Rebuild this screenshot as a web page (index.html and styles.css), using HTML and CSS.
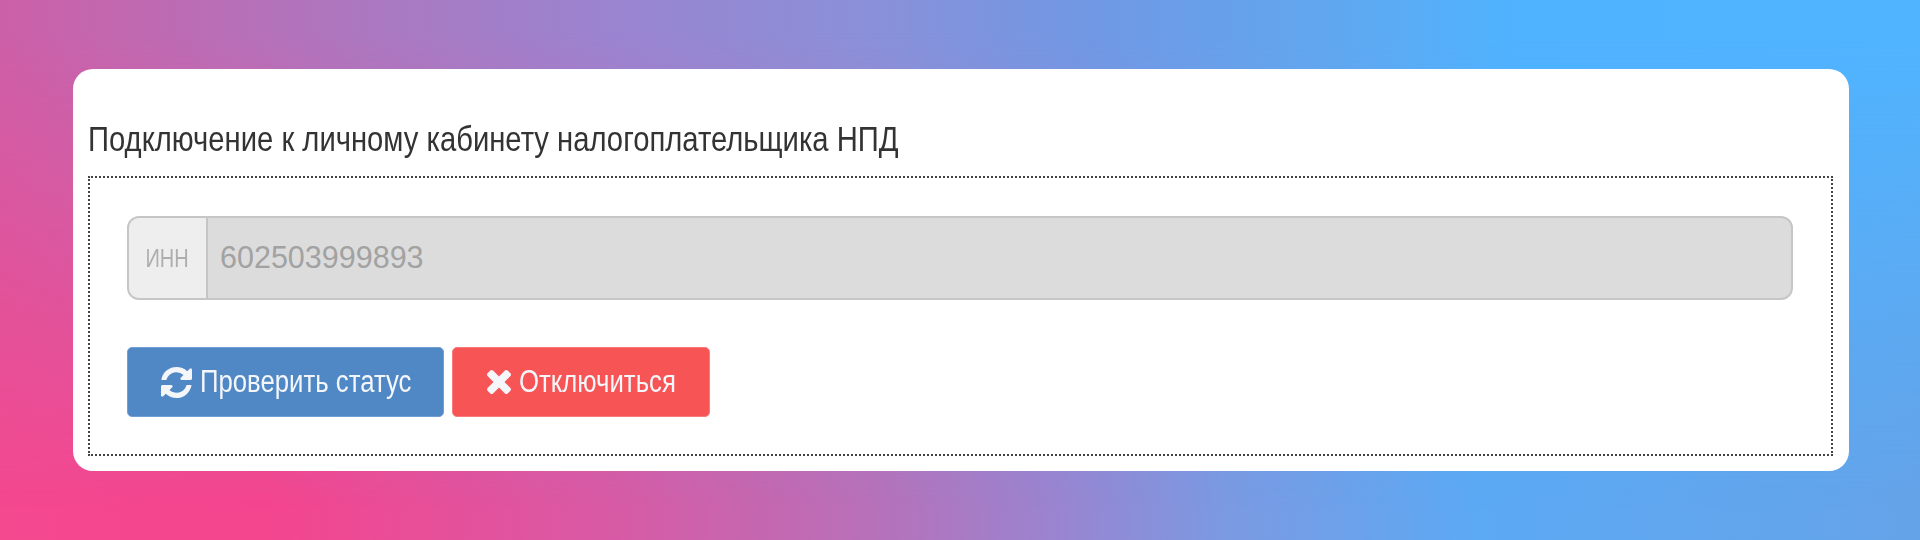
FILE: index.html
```html
<!DOCTYPE html>
<html lang="ru">
<head>
<meta charset="utf-8">
<title>Подключение к личному кабинету налогоплательщика НПД</title>
<link rel="stylesheet" href="styles.css">
</head>
<body>
<main class="card">
  <h1 class="title">Подключение к личному кабинету налогоплательщика НПД</h1>
  <section class="box">
    <div class="input-group">
      <span class="addon"><span class="addon-text">ИНН</span></span>
      <span class="value">602503999893</span>
    </div>
    <div class="actions">
      <button class="btn btn-blue" type="button">
        <svg class="icon" viewBox="0 0 1536 1536" aria-hidden="true"><path fill="currentColor" d="M1511 928q0 5-1 7-64 268-268 434.500T764 1536q-146 0-282.500-55T238 1324l-129 129q-19 19-45 19t-45-19-19-45V960q0-26 19-45t45-19h448q26 0 45 19t19 45-19 45L420 1142q71 66 161 102t187 36q134 0 250-65t186-179q11-17 53-117 8-23 30-23h192q13 0 22.500 9.500t9.500 22.500zm25-800v448q0 26-19 45t-45 19h-448q-26 0-45-19t-19-45 19-45l138-138q-148-137-349-137-134 0-250 65T332 500q-11 17-53 117-8 23-30 23H50q-13 0-22.500-9.500T18 608v-7q65-268 270-434.500T768 0q146 0 284 55.500T1297 212l130-129q19-19 45-19t45 19 19 45z"/></svg>
        <span class="label label-check">Проверить статус</span>
      </button>
      <button class="btn btn-red" type="button">
        <svg class="icon icon-x" viewBox="0 0 1188 1188" aria-hidden="true"><path fill="currentColor" d="M1188 956q0 40-28 68l-136 136q-28 28-68 28t-68-28L594 866l-294 294q-28 28-68 28t-68-28L28 1024q-28-28-28-68t28-68l294-294L28 300q-28-28-28-68t28-68L164 28q28-28 68-28t68 28l294 294L888 28q28-28 68-28t68 28l136 136q28 28 28 68t-28 68L866 594l294 294q28 28 28 68z"/></svg>
        <span class="label label-off">Отключиться</span>
      </button>
    </div>
  </section>
</main>
</body>
</html>
```

FILE: styles.css
```css
* { box-sizing: border-box; }
html, body { margin: 0; height: 540px; overflow: hidden; }
body {
  position: relative;
  padding: 69px 71px 69px 73px;
  background: linear-gradient(90deg, #f4488f 0%, #f4458f 14%, #d85aa5 32%, #b870b8 45%, #9a84d0 55%, #7a9ae2 64%, #5ca9f4 77%, #65a3e8 100%);
  font-family: "Liberation Sans", sans-serif;
}
body::before {
  content: "";
  position: absolute;
  inset: 0;
  background: linear-gradient(90deg, #cc60a8 0%, #ab78c0 19%, #9a84d0 32%, #8a90d8 45%, #7098e4 57%, #5fa8f0 70%, #4fb3ff 79%, #50b4ff 100%);
  -webkit-mask-image: linear-gradient(180deg, #000 6%, transparent 94%);
  mask-image: linear-gradient(180deg, #000 6%, transparent 94%);
}
.card {
  position: relative;
  height: 402px;
  padding: 47px 16px 15px 15px;
  background: #fff;
  border-radius: 20px;
}
.title {
  margin: 0 0 15px;
  height: 45px;
  font-size: 35px;
  line-height: 45px;
  font-weight: 400;
  color: #333;
  white-space: nowrap;
  transform: scaleX(.835);
  transform-origin: left center;
}
.box {
  height: 280px;
  padding: 38px 38px 0 37px;
  border: 2px dotted #444;
}
.input-group {
  display: flex;
  height: 84px;
  border: 2px solid #c6c6c6;
  border-radius: 12px;
  overflow: hidden;
  background: #dcdcdc;
}
.addon {
  display: flex;
  align-items: center;
  justify-content: center;
  width: 79px;
  border-right: 2px solid #c6c6c6;
  background: #eeeeee;
  color: #aeaeae;
  font-size: 25px;
}
.addon-text { display: inline-block; transform: scaleX(.8); }
.value {
  display: flex;
  align-items: center;
  padding: 0 0 2px 12px;
  font-size: 30.5px;
  color: #a2a2a2;
}
.actions {
  display: flex;
  gap: 8px;
  margin-top: 47px;
}
.btn {
  display: flex;
  align-items: center;
  justify-content: center;
  gap: 8px;
  height: 70px;
  border: 1px solid transparent;
  border-radius: 5px;
  padding: 0;
  color: #f4f6fa;
  font-family: inherit;
  font-size: 31px;
}
.btn-blue { width: 317px; background: #5088c6; border-color: #6f9fd6; }
.btn-red { width: 258px; background: #f75555; border-color: #f97a7a; }
.icon { width: 31px; height: 31px; flex: none; }
.icon-x { width: 24px; height: 24px; }
.label {
  display: block;
  white-space: nowrap;
  text-align: left;
  transform: scaleX(.83);
  transform-origin: left center;
}
.label-check { width: 211px; }
.label-off { width: 157px; }
```
